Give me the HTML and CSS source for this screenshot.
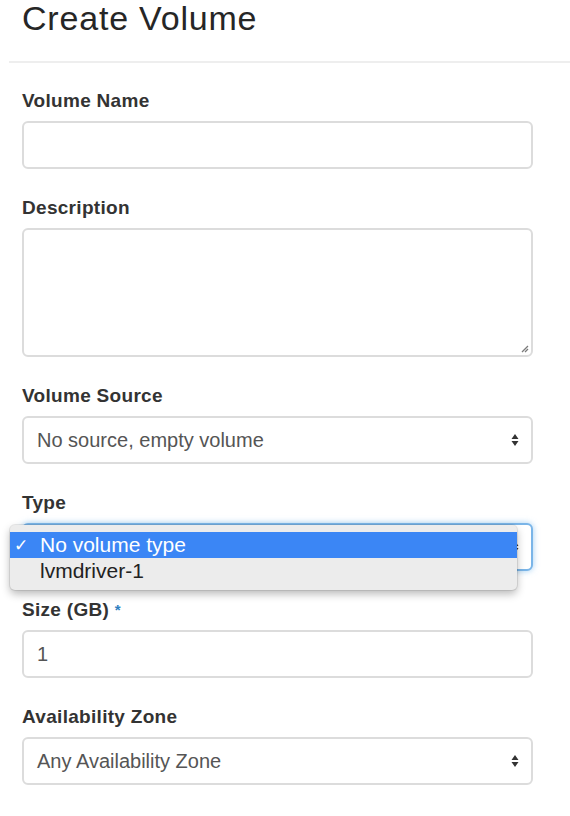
FILE: index.html
```html
<!DOCTYPE html>
<html lang="en">
<head>
<meta charset="utf-8">
<title>Create Volume</title>
<link rel="stylesheet" href="styles.css">
</head>
<body>
<div class="page">
  <h1 class="title">Create Volume</h1>
  <hr class="rule">
  <div class="form">
    <div class="group">
      <div class="label">Volume Name</div>
      <div class="control"></div>
    </div>
    <div class="group">
      <div class="label">Description</div>
      <div class="control textarea">
        <svg class="grip" width="10" height="10" viewBox="0 0 10 10"><path d="M9 3 L3 9 M9 6 L6 9" stroke="#7a7a7a" stroke-width="1.3" fill="none"/></svg>
      </div>
    </div>
    <div class="group">
      <div class="label">Volume Source</div>
      <div class="control select">
        <span>No source, empty volume</span>
        <svg class="arrows" width="8" height="14" viewBox="0 0 8 14"><path d="M4 1 L7.5 6 L0.5 6 Z M4 13 L7.5 8 L0.5 8 Z" fill="#333"/></svg>
      </div>
    </div>
    <div class="group">
      <div class="label">Type</div>
      <div class="anchor">
        <div class="control select focus">
          <span></span>
          <svg class="arrows" width="8" height="14" viewBox="0 0 8 14"><path d="M4 1 L7.5 6 L0.5 6 Z M4 13 L7.5 8 L0.5 8 Z" fill="#333"/></svg>
        </div>
        <div class="menu">
          <div class="option active"><span class="check">✓</span>No volume type</div>
          <div class="option">lvmdriver-1</div>
        </div>
      </div>
    </div>
    <div class="group">
      <div class="label">Size (GB) <span class="req">*</span></div>
      <div class="control"><span>1</span></div>
    </div>
    <div class="group">
      <div class="label">Availability Zone</div>
      <div class="control select">
        <span>Any Availability Zone</span>
        <svg class="arrows" width="8" height="14" viewBox="0 0 8 14"><path d="M4 1 L7.5 6 L0.5 6 Z M4 13 L7.5 8 L0.5 8 Z" fill="#333"/></svg>
      </div>
    </div>
  </div>
</div>
</body>
</html>
```

FILE: styles.css
```css
html, body {
  margin: 0;
  padding: 0;
  background: #fff;
}
body {
  font-family: "Liberation Sans", Arial, Helvetica, sans-serif;
  color: #333;
}
.page {
  padding-left: 9px;
}
.title {
  margin: 0 0 0 13px;
  font-size: 34px;
  font-weight: normal;
  line-height: 36px;
  letter-spacing: 0.8px;
  color: #262626;
}
.rule {
  margin: 25px 0 0 0;
  border: 0;
  border-top: 2px solid #eeeeee;
  height: 0;
}
.form {
  padding: 26px 0 0 13px;
}
.group {
  width: 511px;
  margin-bottom: 27px;
}
.label {
  font-weight: bold;
  font-size: 19px;
  letter-spacing: 0.3px;
  line-height: 24px;
  margin-bottom: 8px;
  color: #333;
}
.req {
  color: #2f7fc1;
  font-size: 15px;
  vertical-align: top;
}
.control {
  box-sizing: border-box;
  height: 48px;
  border: 2px solid #dcdcdc;
  border-radius: 6px;
  padding: 0 13px;
  display: flex;
  align-items: center;
  justify-content: space-between;
  font-size: 20px;
  color: #555;
  background: #fff;
}
.textarea {
  height: 129px;
  position: relative;
}
.grip {
  position: absolute;
  right: 2px;
  bottom: 2px;
}
.arrows {
  margin-right: -1px;
}
.anchor {
  position: relative;
}
.focus {
  border-color: #7ab5e8;
  box-shadow: 0 0 6px rgba(102, 175, 233, 0.6);
}
.menu {
  position: absolute;
  left: -12px;
  top: 2px;
  width: 507px;
  box-sizing: border-box;
  background: #ececec;
  border-radius: 5px;
  padding: 7px 0 6px;
  box-shadow: 0 4px 9px rgba(0, 0, 0, 0.28), 0 0 0 1px rgba(0, 0, 0, 0.08);
}
.option {
  position: relative;
  height: 26px;
  line-height: 26px;
  font-size: 21px;
  padding-left: 30px;
  color: #222;
}
.option.active {
  background: #3b86f5;
  color: #fff;
}
.check {
  position: absolute;
  left: 4px;
  top: 0;
  font-family: "DejaVu Sans", sans-serif;
  font-size: 17px;
  font-weight: bold;
}
```
